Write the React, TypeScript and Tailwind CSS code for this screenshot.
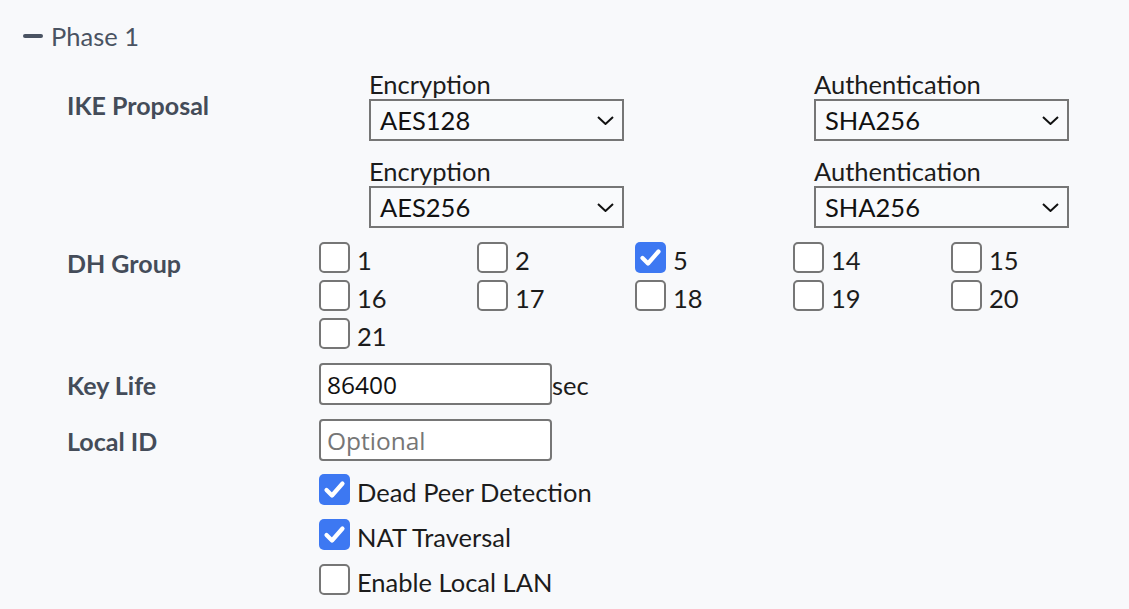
import React from 'react';

const dhGroups = [
  { value: '1', checked: false },
  { value: '2', checked: false },
  { value: '5', checked: true },
  { value: '14', checked: false },
  { value: '15', checked: false },
  { value: '16', checked: false },
  { value: '17', checked: false },
  { value: '18', checked: false },
  { value: '19', checked: false },
  { value: '20', checked: false },
  { value: '21', checked: false },
];

const proposals = [
  { encryption: 'AES128', authentication: 'SHA256' },
  { encryption: 'AES256', authentication: 'SHA256' },
];

function Box({ checked }: { checked: boolean }) {
  if (checked) {
    return (
      <span className="flex h-[31px] w-[31px] shrink-0 items-center justify-center rounded-[5px] bg-[#3d78f2]">
        <svg width="31" height="31" viewBox="0 0 31 31" fill="none">
          <path d="M7.5 16 L13 21.5 L23.5 9.5" stroke="white" strokeWidth="4.2" strokeLinecap="round" strokeLinejoin="round" />
        </svg>
      </span>
    );
  }
  return <span className="h-[31px] w-[31px] shrink-0 rounded-[5px] border-2 border-[#767676] bg-white" />;
}

function Check({ label, checked }: { label: string; checked: boolean }) {
  return (
    <label className="flex h-[31px] items-center">
      <Box checked={checked} />
      <span className="ml-[7px] mt-[4px] whitespace-nowrap">{label}</span>
    </label>
  );
}

function Select({ value }: { value: string }) {
  return (
    <div className="flex h-[42px] w-[255px] items-center justify-between border-2 border-[#767676] bg-[#f9fafc] pl-[9px] pr-[8px] text-[#111]">
      <span>{value}</span>
      <svg width="17" height="9" viewBox="0 0 17 9" fill="none">
        <path d="M1 1 L8.5 8 L16 1" stroke="#111" strokeWidth="2" />
      </svg>
    </div>
  );
}

function TextField({ value, placeholder }: { value?: string; placeholder?: string }) {
  return (
    <input
      readOnly
      value={value ?? ''}
      placeholder={placeholder}
      className="h-[42px] w-[233px] rounded-[4px] border-2 border-[#767676] bg-white px-[6px] font-['Open_Sans',sans-serif] text-[24.5px] text-[#111] placeholder:text-[#767676] outline-none"
    />
  );
}

export default function App() {
  return (
    <div className="min-h-screen bg-[#f8f9fb] pt-[20px] font-['Lato',sans-serif] text-[25.5px] leading-[28px] text-[#1c1c1c]">
      <div className="flex h-[32px] items-center pl-[23px]">
        <span className="h-[4px] w-[20px] rounded-full bg-[#4a5362]" />
        <span className="ml-[8px] text-[#4a5362]">Phase 1</span>
      </div>

      <div className="mt-[18px] pl-[67px]">
        {/* IKE proposal */}
        <div className="flex">
          <div className="w-[252px] pt-[21px] text-[25px] font-bold text-[#444c59]">IKE Proposal</div>
          <div className="flex flex-col gap-[16px] pl-[50px]">
            {proposals.map((p, i) => (
              <div key={i} className="flex">
                <div className="w-[445px]">
                  <div>Encryption</div>
                  <div className="mt-[1px]">
                    <Select value={p.encryption} />
                  </div>
                </div>
                <div>
                  <div>Authentication</div>
                  <div className="mt-[1px]">
                    <Select value={p.authentication} />
                  </div>
                </div>
              </div>
            ))}
          </div>
        </div>

        {/* DH group */}
        <div className="mt-[14px] flex">
          <div className="w-[252px] pt-[7px] text-[25px] font-bold text-[#444c59]">DH Group</div>
          <div className="grid grid-cols-[repeat(5,158px)] gap-y-[7px]">
            {dhGroups.map((g) => (
              <Check key={g.value} label={g.value} checked={g.checked} />
            ))}
          </div>
        </div>

        {/* Key life */}
        <div className="mt-[14px] flex items-center">
          <div className="w-[252px] mt-[2px] text-[25px] font-bold text-[#444c59]">Key Life</div>
          <TextField value="86400" />
          <span className="mt-[2px]">sec</span>
        </div>

        {/* Local ID */}
        <div className="mt-[14px] flex items-center">
          <div className="w-[252px] mt-[2px] text-[25px] font-bold text-[#444c59]">Local ID</div>
          <TextField placeholder="Optional" />
        </div>

        <div className="mt-[13px] flex flex-col gap-[14px] pb-[14px] pl-[252px]">
          <Check label="Dead Peer Detection" checked />
          <Check label="NAT Traversal" checked />
          <Check label="Enable Local LAN" checked={false} />
        </div>
      </div>
    </div>
  );
}
